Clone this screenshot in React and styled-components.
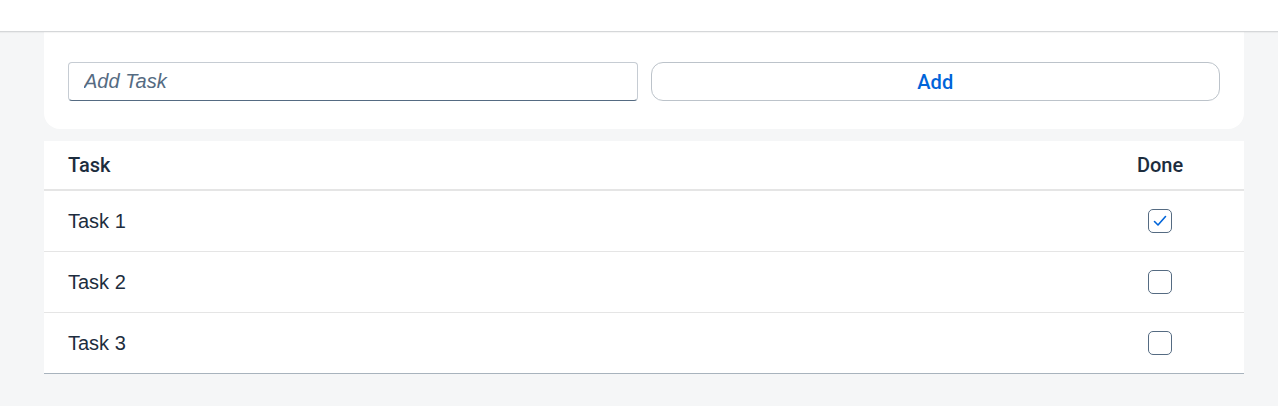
import styled, { createGlobalStyle } from "styled-components";

const GlobalStyle = createGlobalStyle`
  html, body {
    margin: 0;
    padding: 0;
    background: #f5f6f7;
    font-family: "Liberation Sans", Arial, sans-serif;
    color: #1d2d3e;
  }
`;

const Page = styled.div`
  min-height: 406px;
  background: #f5f6f7;
`;

const Header = styled.header`
  position: relative;
  z-index: 1;
  height: 31px;
  background: #ffffff;
  box-shadow: 0 1px 0 #d5d7d9, 0 2px 1px rgba(0, 0, 0, 0.04);
`;

const Content = styled.main`
  padding: 0 34px 0 44px;
  display: flex;
  flex-direction: column;
  gap: 12px;
`;

const Card = styled.section`
  background: #ffffff;
  border-radius: 0 0 16px 16px;
  padding: 31px 24px 28px 24px;
  display: grid;
  grid-template-columns: 1fr 1fr;
  gap: 13px;
`;

const Input = styled.input`
  box-sizing: border-box;
  height: 39px;
  border: 1px solid #c6ccd3;
  border-bottom-color: #556b82;
  border-radius: 4px;
  padding: 0 15px;
  font-family: inherit;
  font-size: 20px;
  color: #1d2d3e;
  outline: none;
  background: #fff;

  &::placeholder {
    color: #556b82;
    font-style: italic;
  }
`;

const Button = styled.button`
  box-sizing: border-box;
  height: 39px;
  border: 1px solid #bcc3ca;
  border-radius: 12px;
  background: #fff;
  color: #0064d9;
  font-family: Roboto, "Liberation Sans", sans-serif;
  font-size: 20px;
  font-weight: 500;
  cursor: pointer;
`;

const Table = styled.div`
  background: #fff;
  border-bottom: 1px solid #a8b3bd;
`;

const Row = styled.div`
  display: grid;
  grid-template-columns: 1fr 150px;
  align-items: center;
  height: ${(p) => (p.$head ? "48px" : "60px")};
  padding-left: 24px;
  border-bottom: ${(p) => (p.$head ? "2px solid #e5e5e5" : "1px solid #e5e5e5")};
  font-size: 20px;
  font-family: ${(p) => (p.$head ? 'Roboto, "Liberation Sans", sans-serif' : "inherit")};
  font-weight: ${(p) => (p.$head ? 500 : 400)};

  &:last-child {
    border-bottom: none;
  }
`;

const Center = styled.div`
  display: flex;
  justify-content: center;
  padding-right: 18px;
`;

const Box = styled.span`
  box-sizing: border-box;
  width: 24px;
  height: 24px;
  border: 1px solid #556b82;
  border-radius: 5px;
  display: flex;
  align-items: center;
  justify-content: center;
`;

function Checkbox({ checked }) {
  return (
    <Box>
      {checked && (
        <svg width="16" height="16" viewBox="0 0 16 16" fill="none">
          <path d="M2.5 8.5 L6 12 L13.5 3.5" stroke="#0064d9" strokeWidth="1.6" strokeLinecap="round" strokeLinejoin="round" />
        </svg>
      )}
    </Box>
  );
}

const tasks = [
  { name: "Task 1", done: true },
  { name: "Task 2", done: false },
  { name: "Task 3", done: false },
];

export default function App() {
  return (
    <>
      <GlobalStyle />
      <Page>
        <Header />
        <Content>
          <Card>
            <Input placeholder="Add Task" />
            <Button>Add</Button>
          </Card>
          <Table>
            <Row $head>
              <div>Task</div>
              <Center>Done</Center>
            </Row>
            {tasks.map((t) => (
              <Row key={t.name}>
                <div>{t.name}</div>
                <Center>
                  <Checkbox checked={t.done} />
                </Center>
              </Row>
            ))}
          </Table>
        </Content>
      </Page>
    </>
  );
}
